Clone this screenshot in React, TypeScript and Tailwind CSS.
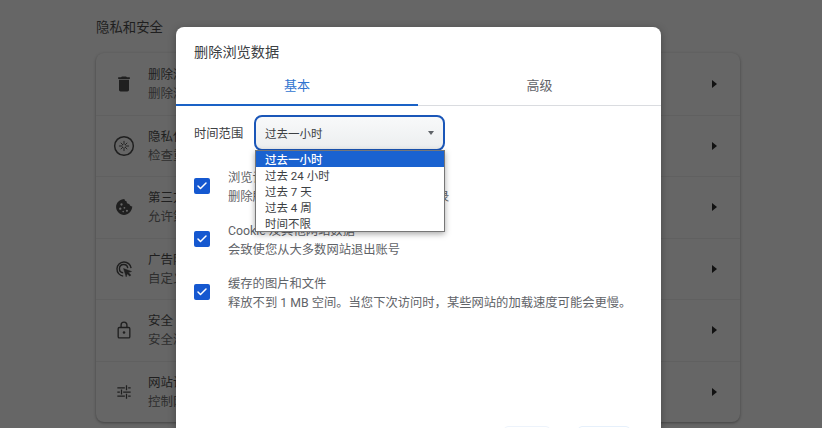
import { Check } from 'lucide-react';
import type { ReactNode } from 'react';

const font = "font-['Roboto','Noto_Sans_CJK_SC',sans-serif]";

const rows: { icon: ReactNode; title: string; sub: string }[] = [
  {
    icon: (
      <svg viewBox="0 0 24 24" className="w-5 h-5" fill="#1f1f1f">
        <path d="M6 19c0 1.100.9 2 2 2h8c1.100 0 2-.9 2-2V7H6v12zM19 4h-3.500l-1-1h-5l-1 1H5v2h14V4z" />
      </svg>
    ),
    title: '删除浏览数据',
    sub: '删除浏览记录、Cookie',
  },
  {
    icon: (
      <svg viewBox="0 0 24 24" className="w-5 h-5 scale-[1.1]" fill="none" stroke="#1f1f1f" strokeWidth="1.6">
        <circle cx="12" cy="12" r="10.200" />
        <path d="M12 6.500v4M12 13.500v4M6.500 12h4M13.500 12h4M8.500 8.500l2.400 2.400M13.100 13.100l2.400 2.400M15.500 8.500l-2.400 2.400M10.900 13.100l-2.400 2.400" strokeWidth="1" />
      </svg>
    ),
    title: '隐私保护指南',
    sub: '检查重要的隐私设置',
  },
  {
    icon: (
      <svg viewBox="0 0 24 24" className="w-5 h-5" fill="#1f1f1f">
        <path d="M21.900 11.500c-1.800 0-3.300-1.300-3.500-3-1.900.2-3.500-1.400-3.400-3.300-1.500-.3-2.400-1.500-2.500-2.700C7 2.500 2.500 7 2.500 12s4.500 9.500 9.500 9.500 9.700-4.500 9.900-10z" />
        <circle cx="9" cy="9" r="1.400" fill="#666" />
        <circle cx="7.500" cy="14" r="1.400" fill="#666" />
        <circle cx="12.500" cy="13" r="1.100" fill="#666" />
        <circle cx="15.500" cy="16.500" r="1.300" fill="#666" />
        <circle cx="11" cy="17.500" r="1" fill="#666" />
      </svg>
    ),
    title: '第三方 Cookie',
    sub: '允许第三方 Cookie',
  },
  {
    icon: (
      <svg viewBox="0 0 24 24" className="w-5 h-5" fill="none" stroke="#1f1f1f" strokeWidth="1.700">
        <path d="M11 20.500A8.500 8.500 0 1 1 20.500 11" />
        <path d="M11 16.500A5 5 0 1 1 16.500 11" />
        <path d="M11.500 11.500l9.500 3.500-3.800 1.300 3 3-1.300 1.300-3-3-1.300 3.800z" fill="#1f1f1f" strokeWidth="0.600" />
      </svg>
    ),
    title: '广告隐私权',
    sub: '自定义广告主题',
  },
  {
    icon: (
      <svg viewBox="0 0 24 24" className="w-5 h-5" fill="none" stroke="#1f1f1f" strokeWidth="1.600">
        <rect x="5" y="9" width="14" height="12.500" rx="1.500" />
        <path d="M8.500 9V6a3.500 3.500 0 0 1 7 0v3" />
        <circle cx="12" cy="15" r="1.500" fill="#1f1f1f" stroke="none" />
      </svg>
    ),
    title: '安全',
    sub: '安全浏览和其他设置',
  },
  {
    icon: (
      <svg viewBox="0 0 24 24" className="w-5 h-5" fill="none" stroke="#1f1f1f" strokeWidth="1.500">
        <path d="M4 7h9M17 7h3M15 4v6M4 12h3M11 12h9M9 9v6M4 17h9M17 17h3M15 14v6" />
      </svg>
    ),
    title: '网站设置',
    sub: '控制网站可以使用的信息',
  },
];

const options = ['过去一小时', '过去 24 小时', '过去 7 天', '过去 4 周', '时间不限'];

const checks = [
  { title: '浏览记录', sub: '删除所有已登录设备上的历史和搜索记录' },
  { title: 'Cookie 及其他网站数据', sub: '会致使您从大多数网站退出账号' },
  { title: '缓存的图片和文件', sub: '释放不到 1 MB 空间。当您下次访问时，某些网站的加载速度可能会更慢。' },
];

export default function App() {
  return (
    <div className={`relative h-[428px] w-[822px] overflow-hidden bg-[#666666] ${font}`}>
      {/* Settings page behind the scrim */}
      <div className="ml-[96px] w-[644px] pt-[19px]">
        <h2 className="text-[13.400px] leading-[18px] text-[#1f1f1f]">隐私和安全</h2>
        <div className="mt-[16px] rounded-lg bg-[#666666] shadow-[0_1px_3px_rgba(0,0,0,0.35)]">
          {rows.map((r, i) => (
            <div
              key={r.title}
              className={`flex h-[61.500px] items-center pl-[18px] pr-[23px] ${i > 0 ? 'border-t border-[#606060]' : ''}`}
            >
              <div className="w-[34px]">{r.icon}</div>
              <div className="flex-1 text-[12.500px] leading-[19px] text-[#1f1f1f]">
                <div>{r.title}</div>
                <div className="text-[#2e2e2e]">{r.sub}</div>
              </div>
              <div className="h-0 w-0 border-y-[4.500px] border-l-[5px] border-y-transparent border-l-[#111111]" />
            </div>
          ))}
        </div>
      </div>

      {/* Dialog */}
      <div className="absolute left-[176px] top-[27px] h-[430px] w-[485px] rounded-lg bg-white shadow-[0_2px_8px_rgba(0,0,0,0.3)]">
        <h1 className="pl-[18px] pt-[15px] text-[14.200px] leading-[20px] text-[#3c4043]">删除浏览数据</h1>
        <div className="mt-[14px] flex h-[30px] border-b border-[#dadce0] text-[13px] leading-[20px]">
          <div className="h-[30px] w-[242px] border-b-2 border-[#1a62c6] text-center text-[#2f74d0]">基本</div>
          <div className="flex-1 text-center text-[#5f6368]">高级</div>
        </div>

        <div className="ml-[18px] mt-[9px] flex items-start">
          <span className="mt-[10px] w-[60px] text-[12.300px] leading-[18px] text-[#3c4043]">时间范围</span>
          <div className="flex h-[36px] w-[191px] items-center justify-between rounded-lg border-2 border-[#1a56b8] bg-gradient-to-b from-[#f8f9fa] to-[#eceeef] pl-[9px] pr-[9px] text-[11.500px] text-[#3c4043]">
            <span className="pt-[4px]">过去一小时</span>
            <span className="h-0 w-0 border-x-[3.500px] border-t-[4px] border-x-transparent border-t-[#5f6368]" />
          </div>
        </div>

        <div className="ml-[18px] mt-[15px] flex flex-col gap-[13px]">
          {checks.map((c) => (
            <div key={c.title} className="flex items-center">
              <div className="flex h-4 w-4 items-center justify-center rounded-[2px] bg-[#1558d0]">
                <Check className="h-3 w-3 text-white" strokeWidth={3} />
              </div>
              <div className="ml-[18px] whitespace-nowrap pt-[3px] text-[12.300px] leading-[18.500px] text-[#5f6368]">
                <div>{c.title}</div>
                <div>{c.sub}</div>
              </div>
            </div>
          ))}
        </div>

        {/* Dropdown list */}
        <ul className="absolute left-[79px] top-[123px] w-[190px] border border-[#767676] bg-white text-[11.500px] text-[#3c4043] shadow-[0_2px_6px_rgba(0,0,0,0.35)]">
          {options.map((o, i) => (
            <li key={o} className={`h-4 pl-[9px] leading-[18px] ${i === 0 ? 'bg-[#1a62d0] font-medium text-white' : ''}`}>
              {o}
            </li>
          ))}
        </ul>

        {/* Footer buttons, almost entirely below the fold */}
        <div className="absolute right-[31px] top-[399px] flex gap-[28px]">
          <div className="h-[30px] w-[46px] rounded border border-[#edf3fb]" />
          <div className="h-[30px] w-[52px] rounded border border-[#e6f0fb]" />
        </div>
      </div>
    </div>
  );
}
